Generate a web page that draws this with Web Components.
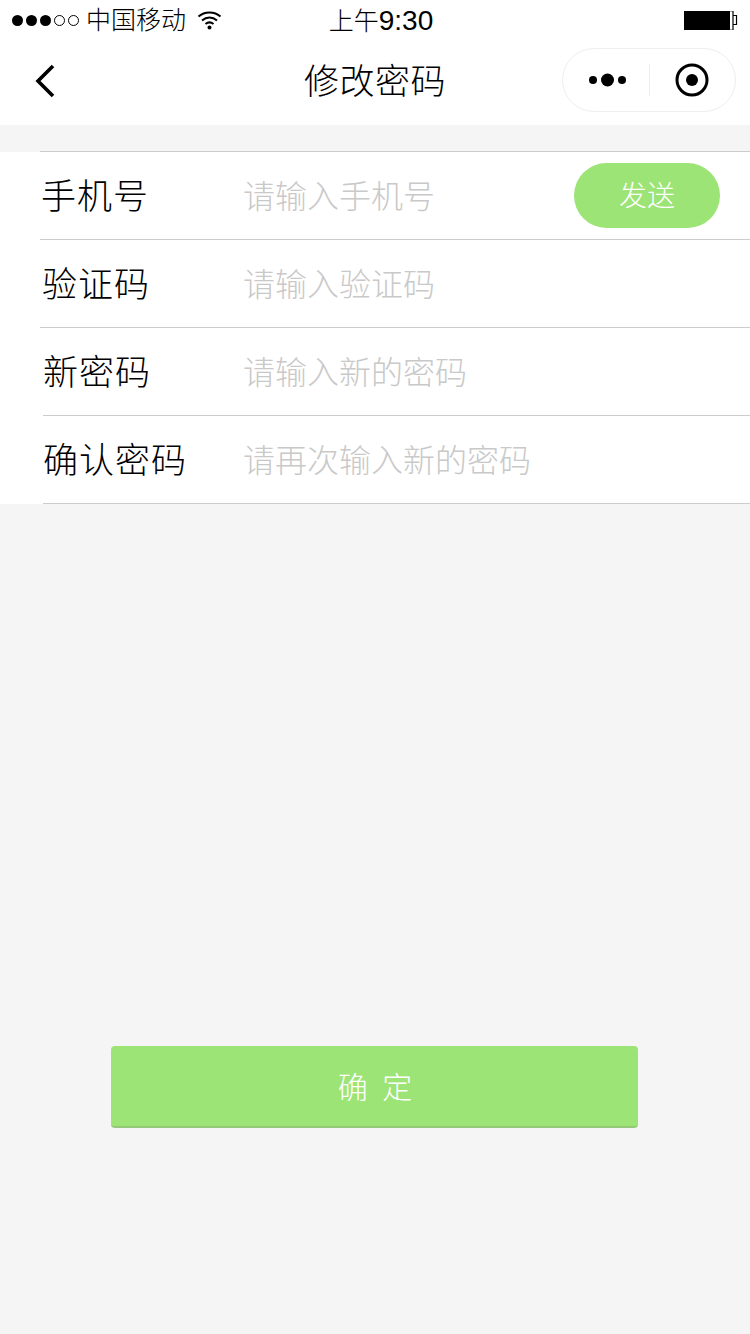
<!DOCTYPE html>
<html lang="zh"><head><meta charset="utf-8"><title>修改密码</title>
<style>
html,body{margin:0;padding:0;background:#f5f5f5}
body{width:750px;height:1334px;overflow:hidden;font-family:"Liberation Sans","Noto Sans CJK SC",sans-serif;font-weight:300;color:#000;display:flex;flex-direction:column}
</style></head><body>
<status-bar></status-bar>
<nav-bar>修改密码</nav-bar>
<form-list>
  <form-row label="手机号" placeholder="请输入手机号" text-left="42" line="40" first><send-button>发送</send-button></form-row>
  <form-row label="验证码" placeholder="请输入验证码" text-left="43" line="40"></form-row>
  <form-row label="新密码" placeholder="请输入新的密码" text-left="43" line="43"></form-row>
  <form-row label="确认密码" placeholder="请再次输入新的密码" text-left="43" line="43"></form-row>
</form-list>
<confirm-button>确 定</confirm-button>
<script>
class Base extends HTMLElement{
  constructor(){super();this.attachShadow({mode:'open'});}
}
customElements.define('status-bar',class extends Base{connectedCallback(){this.shadowRoot.innerHTML=`
<style>
:host{display:grid;grid-template-columns:1fr auto 1fr;align-items:center;height:40px;background:#fff;font-size:25px;color:#000}
.l{display:flex;align-items:center;padding-left:12px}
.dots{display:flex;gap:3px;margin-right:7px}
.dots i{width:11px;height:11px;border-radius:50%;background:#000;box-sizing:border-box}
.dots i.o{background:none;border:1.500px solid #000}
.carrier{padding-bottom:4px}
.wifi{margin-left:11px;display:block}
.t{margin-left:12px;padding-bottom:2px;font-size:25px;white-space:nowrap}
.t b{font-weight:400;font-size:28px}
.r{display:flex;justify-content:flex-end;padding-right:11px}
</style>
<div class="l"><span class="dots"><i></i><i></i><i></i><i class="o"></i><i class="o"></i></span><span class="carrier">中国移动</span>
<svg class="wifi" width="25" height="20" viewBox="0 0 25 20" fill="none" stroke="#000" stroke-width="2"><path d="M1.500 6.500C7.500 1 17.500 1 23.500 6.500"/><path d="M5 10.500C9.500 6.500 15.500 6.500 20 10.500"/><path d="M8.500 14C11 12 14 12 16.500 14"/><circle cx="12.500" cy="17.500" r="2" fill="#000" stroke="none"/></svg></div>
<div class="t">上午<b>9:30</b></div>
<div class="r"><svg width="55" height="19" viewBox="0 0 55 19"><rect width="46" height="19" fill="#000"/><path d="M46 .500H49M46 18.500H49" stroke="#aaa"/><path d="M49 0V19M49 4.500H52.500V13.500H49" fill="none" stroke="#000" stroke-width="1.200"/></svg></div>`}});
customElements.define('nav-bar',class extends Base{connectedCallback(){this.shadowRoot.innerHTML=`
<style>
:host{display:grid;grid-template-columns:1fr auto 1fr;align-items:center;height:85px;background:#fff}
.back{padding-left:35px;display:flex}
.title{font-size:35px;letter-spacing:.5px;color:#000;padding-bottom:8px}
.cap{justify-self:end;margin:0 14px 6px 0;width:174px;height:64px;box-sizing:border-box;border:1px solid #eee;border-radius:32px;display:flex;align-items:center}
.cap>div{flex:1 1 0;display:flex;justify-content:center;align-items:center}
.cap>div:first-child svg{margin-left:4px}
.sep{width:1px;height:32px;background:#eee;flex:none!important}
</style>
<div class="back"><svg width="22" height="34" viewBox="0 0 22 34" style="margin-top:-4px" fill="none" stroke="#000" stroke-width="3.600"><path d="M18 2L3 17L18 32"/></svg></div>
<div class="title"><slot></slot></div>
<div class="cap"><div><svg width="38" height="14" viewBox="0 0 38 14"><circle cx="4" cy="7" r="4"/><circle cx="18.500" cy="7" r="6.500"/><circle cx="33" cy="7" r="4"/></svg></div><div class="sep"></div><div><svg width="34" height="34" viewBox="0 0 34 34"><circle cx="17" cy="17" r="15" fill="none" stroke="#000" stroke-width="3"/><circle cx="17" cy="17" r="6"/></svg></div></div>`}});
customElements.define('form-list',class extends Base{connectedCallback(){this.shadowRoot.innerHTML=`
<style>:host{display:block;margin-top:27px;background:#fff}</style><slot></slot>`}});
customElements.define('form-row',class extends Base{connectedCallback(){
const a=n=>this.getAttribute(n)||'';
const line=+a('line'),left=+a('text-left');
this.shadowRoot.innerHTML=`
<style>
:host{display:flex;align-items:center;height:88px;box-sizing:border-box;margin-left:${line}px;border-bottom:1px solid #ccc;${this.hasAttribute('first')?'box-shadow:0 -1px 0 #ccc;':''}padding-right:30px}
.label{width:${243-line}px;flex:none;box-sizing:border-box;padding-left:${left-line-1}px;padding-bottom:4px;font-size:35px;letter-spacing:1px;color:#000}
.ph{flex:1;font-size:32px;color:#c9c9c9;white-space:nowrap;padding-bottom:4px}
</style>
<div class="label">${a('label')}</div><div class="ph">${a('placeholder')}</div><slot></slot>`}});
customElements.define('send-button',class extends Base{connectedCallback(){this.shadowRoot.innerHTML=`
<style>:host{display:flex;align-items:center;justify-content:center;width:146px;height:65px;box-sizing:border-box;padding-bottom:4px;border-radius:33px;background:#9ce475;color:#fff;font-size:28px;flex:none}</style><slot></slot>`}});
customElements.define('confirm-button',class extends Base{connectedCallback(){this.shadowRoot.innerHTML=`
<style>:host{display:flex;align-items:center;justify-content:center;align-self:flex-start;margin:542px 0 0 111px;width:527px;height:82px;box-sizing:border-box;padding:0 0 3px 4px;border-radius:4px;background:#9ce475;border-bottom:2px solid #95c97a;color:#fff;font-size:30px;letter-spacing:3px}</style><slot></slot>`}});
</script>
</body></html>
